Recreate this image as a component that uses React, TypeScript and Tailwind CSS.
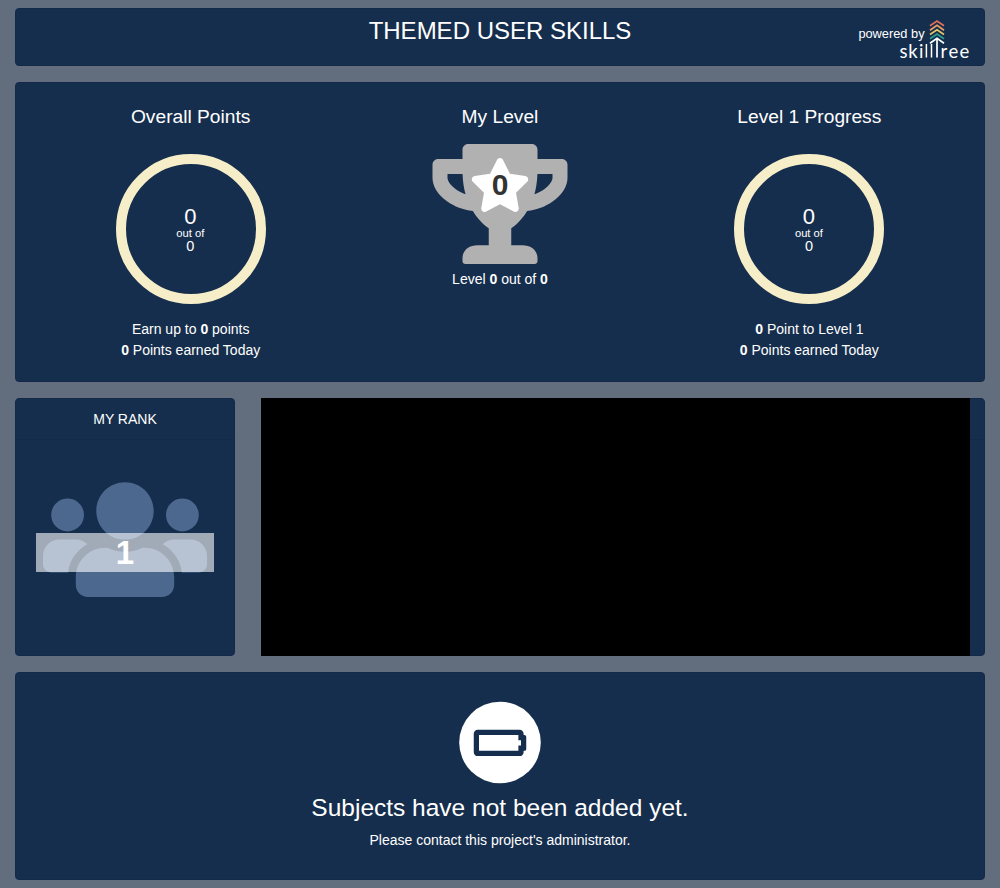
import type { ReactNode } from "react";

const CARD = "rounded-[4px] border border-[#13294a] bg-[#162e4d]";

function Logo() {
  return (
    <svg className="absolute left-[883px] top-[9px]" width="74" height="44" viewBox="0 0 74 44">
      <g fill="none" strokeWidth="1.7">
        <path d="M31 7.8L38 3L45 7.8" stroke="#e0705a" />
        <path d="M31 12.2L38 7.4L45 12.2" stroke="#ef9f64" />
        <path d="M31 16.5L38 11.7L45 16.5" stroke="#e8c468" />
        <path d="M31 20.8L38 16L45 20.8" stroke="#2b9d8f" />
        <path d="M31 25.2L38 20.4L45 25.2M38 20.8V39.5" stroke="#fff" />
        <path d="M27.4 26V39.5M32.5 26V39.5" stroke="#fff" strokeWidth="1.5" />
      </g>
      <g fill="#fff" fontFamily="Lato, sans-serif" fontSize="18.5">
        <text x="0.6 9.2 19.9" y="39.5">ski</text>
        <text x="41.6 49.6 60.6" y="39.5">ree</text>
      </g>
    </svg>
  );
}

function Ring({ title, children }: { title: string; children: ReactNode }) {
  return (
    <section className="flex flex-col items-center">
      <h2 className="text-[19.2px] leading-[23px]">{title}</h2>
      <div className="mt-[26px] flex h-[150px] w-[150px] flex-col items-center rounded-full border-[10px] border-[#f6eec9] pr-[0.8px] pt-[41px]">
        <span className="text-[22px] leading-[24px]">0</span>
        <span className="text-[11.2px] leading-[9px]">out of</span>
        <span className="text-[14.5px] leading-[17px]">0</span>
      </div>
      <div className="mt-[15px] text-center leading-[21px]">{children}</div>
    </section>
  );
}

function Trophy() {
  return (
    <div className="relative mt-4 h-[120px] w-[136px]">
      <svg width="136" height="120" viewBox="-2.13 0 580.27 512" fill="#b1b1b1">
        <path d="M552 64H448V24c0-13.3-10.7-24-24-24H152c-13.3 0-24 10.7-24 24v40H24C10.7 64 0 74.7 0 88v56c0 35.7 22.5 72.4 61.9 100.7 31.5 22.7 69.8 37.1 110 41.7C203.3 338.5 240 360 240 360v72h-48c-35.3 0-64 20.7-64 56v12c0 6.6 5.4 12 12 12h296c6.6 0 12-5.4 12-12v-12c0-35.3-28.7-56-64-56h-48v-72s36.7-21.5 68.1-73.6c40.3-4.6 78.6-19 110-41.7 39.3-28.3 61.9-65 61.9-100.7V88c0-13.3-10.7-24-24-24zM99.3 192.8C74.9 175.2 64 155.6 64 144v-16h64.2c1 32.6 5.8 61.2 12.8 86.2-15.1-5.2-29.2-12.4-41.7-21.4zM512 144c0 16.1-17.7 36.1-35.3 48.8-12.5 9-26.7 16.2-41.8 21.4 7-25 11.8-53.6 12.8-86.2H512v16z" />
      </svg>
      <svg className="absolute left-[37px] top-[14px]" width="62" height="54" viewBox="-5.9 0 587.8 512" fill="#fff">
        <path d="M259.3 17.8L194 150.2 47.9 171.5c-26.2 3.8-36.7 36.1-17.7 54.6l105.7 103-25 145.5c-4.5 26.3 23.2 46 46.4 33.7L288 439.6l130.7 68.7c23.2 12.2 50.9-7.4 46.4-33.7l-25-145.5 105.7-103c19-18.5 8.5-50.8-17.7-54.6L382 150.2 316.7 17.8c-11.7-23.6-45.6-23.9-57.4 0z" />
      </svg>
      <span className="absolute inset-x-0 top-[24px] text-center text-[30px] font-bold leading-[34px] text-[#333]">0</span>
    </div>
  );
}

export default function App() {
  return (
    <main className="flex h-[888px] w-[1000px] flex-col gap-4 bg-[#626d7d] px-[15px] py-2 font-['Liberation_Sans',Arial,sans-serif] text-[14px] text-white">
      <header className={`${CARD} relative h-[58px] text-center`}>
        <h1 className="pt-[7px] text-[24px] leading-[29px]">THEMED USER SKILLS</h1>
        <span className="absolute left-[842.4px] top-[17px] text-[12.8px] leading-[16px]">powered by</span>
        <Logo />
      </header>

      <div className={`${CARD} grid h-[300px] grid-cols-3 px-5 pt-[22px]`}>
        <Ring title="Overall Points">
          <p>Earn up to <b>0</b> points</p>
          <p><b>0</b> Points earned Today</p>
        </Ring>
        <section className="flex flex-col items-center">
          <h2 className="text-[19.2px] leading-[23px]">My Level</h2>
          <Trophy />
          <p className="mt-[5px] leading-[21px]">Level <b>0</b> out of <b>0</b></p>
        </section>
        <Ring title="Level 1 Progress">
          <p><b>0</b> Point to Level 1</p>
          <p><b>0</b> Points earned Today</p>
        </Ring>
      </div>

      <div className="flex h-[258px] gap-[26px]">
        <section className={`${CARD} w-[220px]`}>
          <h3 className="h-[41px] border-b border-[#13294a] text-center leading-[41px]">MY RANK</h3>
          <div className="relative mx-5 mt-[34px] flex justify-center">
            <svg width="164" height="131.2" viewBox="0 0 640 512" fill="#4c688f">
              <path d="M96 224c35.3 0 64-28.7 64-64s-28.7-64-64-64-64 28.7-64 64 28.7 64 64 64zm448 0c35.3 0 64-28.7 64-64s-28.7-64-64-64-64 28.7-64 64 28.7 64 64 64zm32 32h-64c-17.6 0-33.5 7.1-45.1 18.6 40.3 22.1 68.9 62 75.1 109.4h66c17.7 0 32-14.3 32-32v-32c0-35.3-28.7-64-64-64zm-256 0c61.9 0 112-50.1 112-112S381.9 32 320 32 208 82.1 208 144s50.1 112 112 112zm76.8 32h-8.3c-20.8 10-43.9 16-68.5 16s-47.6-6-68.5-16h-8.3C179.6 288 128 339.6 128 403.2V432c0 26.5 21.5 48 48 48h288c26.5 0 48-21.5 48-48v-28.8c0-63.6-51.6-115.2-115.2-115.2zm-223.7-13.4C161.5 263.1 145.6 256 128 256H64c-35.3 0-64 28.7-64 64v32c0 17.7 14.3 32 32 32h65.9c6.3-47.4 34.9-87.3 75.2-109.4z" />
            </svg>
            <div className="absolute inset-x-0 top-[59px] h-[39px] bg-white/60 text-center text-[33px] font-bold leading-[40px]">1</div>
          </div>
        </section>
        <section className={`${CARD} relative flex-1`}>
          <div className="h-[41px] border-b border-[#13294a]" />
          <div className="absolute -bottom-px -left-px -top-px w-[709px] bg-black" />
        </section>
      </div>

      <section className={`${CARD} flex h-[208px] flex-col items-center pt-[28px]`}>
        <svg width="84" height="84" viewBox="0 0 84 84">
          <circle cx="42" cy="41.5" r="40.8" fill="#fff" />
          <path
            transform="translate(15.75 21) scale(.08203)"
            fill="#162e4d"
            d="M544 160v64h32v64h-32v64H64V160h480m16-64H48c-26.51 0-48 21.49-48 48v224c0 26.51 21.49 48 48 48h512c26.51 0 48-21.49 48-48v-16h8c13.255 0 24-10.745 24-24V184c0-13.255-10.745-24-24-24h-8v-16c0-26.51-21.49-48-48-48z"
          />
        </svg>
        <h2 className="mt-[8px] text-[24.5px] leading-[30px]">Subjects have not been added yet.</h2>
        <p className="mt-[7px] leading-[21px]">Please contact this project's administrator.</p>
      </section>
    </main>
  );
}
